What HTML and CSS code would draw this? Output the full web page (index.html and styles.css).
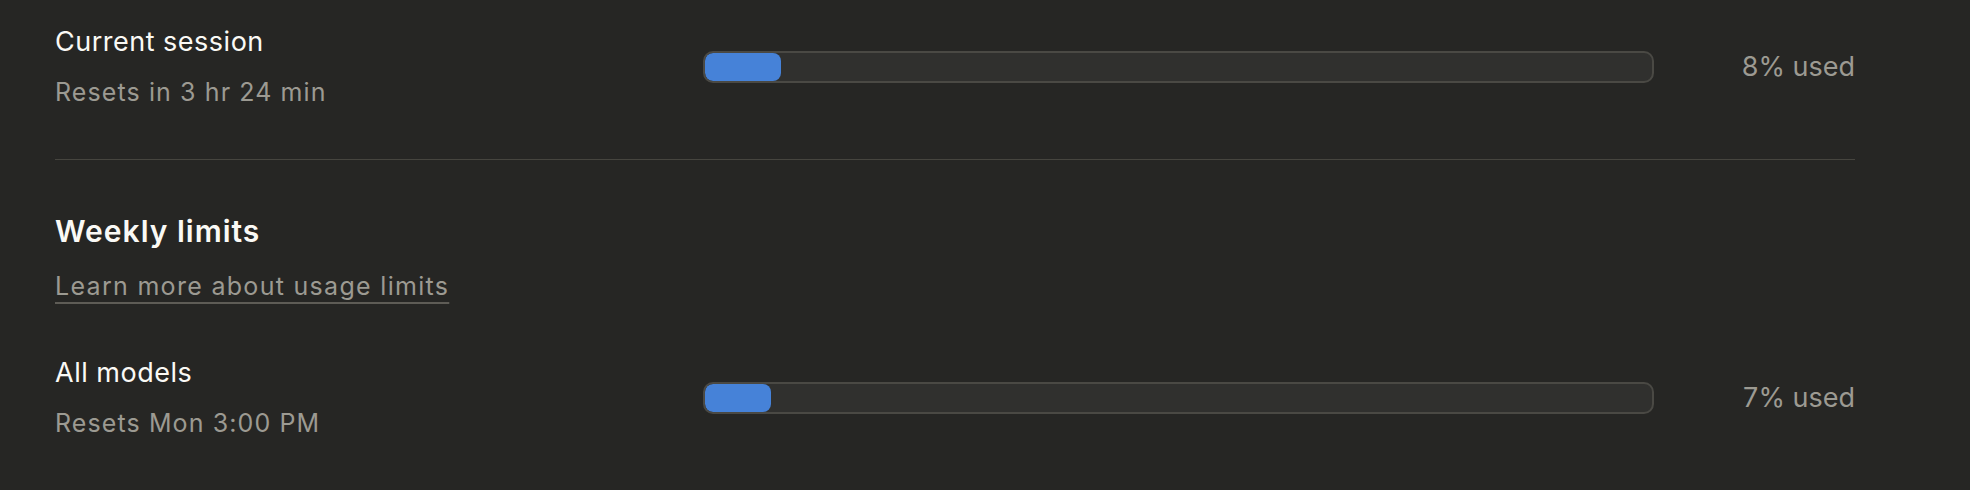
FILE: index.html
```html
<!DOCTYPE html>
<html lang="en">
<head>
<meta charset="utf-8">
<title>Usage</title>
<link rel="stylesheet" href="styles.css">
</head>
<body>
<main class="usage">
  <section class="limit-row">
    <div class="limit-text">
      <p class="limit-title">Current session</p>
      <p class="limit-sub">Resets in 3 hr 24 min</p>
    </div>
    <div class="meter"><div class="meter-fill" style="width: 8%"></div></div>
    <p class="limit-pct">8% used</p>
  </section>

  <hr class="divider">

  <section class="weekly">
    <h2 class="weekly-title">Weekly limits</h2>
    <a class="weekly-link" href="#">Learn more about usage limits</a>
  </section>

  <section class="limit-row">
    <div class="limit-text">
      <p class="limit-title">All models</p>
      <p class="limit-sub">Resets Mon 3:00 PM</p>
    </div>
    <div class="meter"><div class="meter-fill" style="width: 7%"></div></div>
    <p class="limit-pct">7% used</p>
  </section>
</main>
</body>
</html>
```

FILE: styles.css
```css
html, body {
  margin: 0;
  padding: 0;
  background: #262624;
}

body {
  font-family: Inter, "Noto Sans", "Liberation Sans", sans-serif;
  color: #faf9f5;
}

p, h2 {
  margin: 0;
}

.usage {
  width: 1800px;
  padding: 23px 0 0 55px;
  display: flex;
  flex-direction: column;
}

.limit-row {
  display: grid;
  grid-template-columns: 648px 951px 1fr;
  align-items: center;
}

.limit-text {
  display: flex;
  flex-direction: column;
  gap: 14px;
}

.limit-title {
  padding-top: 1px;
  font-size: 27px;
  line-height: 36px;
  letter-spacing: 0.5px;
  color: #faf9f5;
}

.limit-sub {
  font-size: 25px;
  line-height: 36px;
  letter-spacing: 1.1px;
  color: #9c9a92;
}

.meter {
  height: 28px;
  border: 2px solid #4a4944;
  border-radius: 10px;
  background: #30302e;
  overflow: hidden;
}

.meter-fill {
  height: 100%;
  border-radius: 8px;
  background: #4682d8;
}

.limit-pct {
  justify-self: end;
  font-size: 27px;
  line-height: 36px;
  color: #9c9a92;
}

.divider {
  width: 100%;
  margin: 49px 0 0;
  border: 0;
  border-top: 1px solid #46453f;
}

.weekly {
  display: flex;
  flex-direction: column;
  align-items: flex-start;
  gap: 17px;
  padding: 51px 0 50px;
}

.weekly-title {
  font-size: 30px;
  line-height: 40px;
  font-weight: 600;
  letter-spacing: 1px;
  color: #faf9f5;
}

.weekly-link {
  font-size: 25px;
  line-height: 36px;
  letter-spacing: 1.3px;
  color: #9c9a92;
  text-decoration: underline;
  text-decoration-color: #5e5c56;
  text-decoration-thickness: 2px;
  text-underline-offset: 7px;
}
```
